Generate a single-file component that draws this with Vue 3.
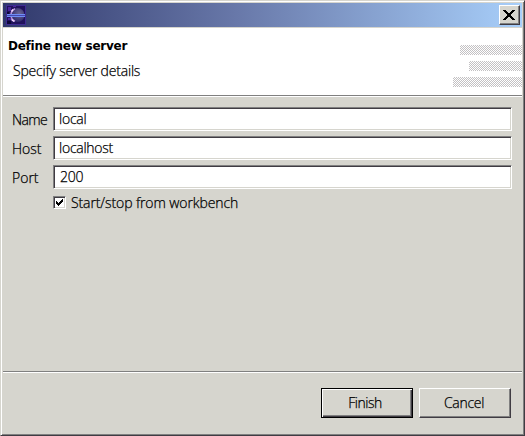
<script setup>
import { ref } from 'vue'

const fields = ref([
  { id: 'name', label: 'Name', value: 'local' },
  { id: 'host', label: 'Host', value: 'localhost' },
  { id: 'port', label: 'Port', value: '200' },
])
const managed = ref(true)
</script>

<template>
  <div class="dialog">
    <header class="titlebar">
      <svg class="logo" width="20" height="20" viewBox="0 0 20 20">
        <defs>
          <radialGradient id="orb" cx=".62" cy=".4" r=".65">
            <stop offset="0" stop-color="#6c6898" />
            <stop offset="1" stop-color="#2c2566" />
          </radialGradient>
        </defs>
        <rect width="20" height="20" fill="#3f2b94" />
        <rect x="1" y="1" width="18" height="18" fill="#21125c" />
        <path d="M2 2h3v4H2zM7 1h3v1H7zM2 13h3v2H2z" fill="#4a259c" />
        <path d="M1 16h4v3H1zM1 7h2v2H1z" fill="#0d0638" />
        <circle cx="11.5" cy="10" r="7" fill="url(#orb)" />
        <path d="M9 3.8Q5 5.5 5 10t4 6.2" fill="none" stroke="#b792dc" stroke-width="1.5" />
        <path d="M7 4.5 5.5 6.5M5.5 14.5 8 16.5" stroke="#f3dcff" stroke-width="1.4" />
        <path d="M1 9.5h18M1 11.5h18" stroke="#6f8df6" />
        <path d="M1 10.5h18" stroke="#4648b0" />
      </svg>
      <button class="close" aria-label="Close">
        <svg width="12" height="10" viewBox="0 0 12 10" shape-rendering="crispEdges">
          <template v-for="i in 10" :key="i">
            <rect :x="i - 1" :y="i - 1" width="3" height="1" />
            <rect :x="10 - i" :y="i - 1" width="3" height="1" />
          </template>
        </svg>
      </button>
    </header>

    <section class="banner">
      <div class="heading">
        <h1>Define new server</h1>
        <p>Specify server details</p>
      </div>
      <div class="stripes"><i class="mid" /><i class="short" /><i class="long" /></div>
    </section>

    <main class="form">
      <div v-for="f in fields" :key="f.id" class="row">
        <label :for="f.id" :class="f.id">{{ f.label }}</label>
        <input :id="f.id" v-model="f.value" :class="f.id" type="text" spellcheck="false" />
      </div>
      <div class="check" @click="managed = !managed">
        <span class="box">
          <svg v-if="managed" width="7" height="7" viewBox="0 0 7 7" shape-rendering="crispEdges">
            <path d="M0 2h1v1h1v1h1V3h1V2h1V1h1V0h1v3H6v1H5v1H4v1H3v1H2V6H1V5H0z" />
          </svg>
        </span>
        <span class="caption">Start/stop from workbench</span>
      </div>
    </main>

    <footer class="actions">
      <button class="btn primary"><span>Finish</span></button>
      <button class="btn"><span>Cancel</span></button>
    </footer>
  </div>
</template>

<style>
body { margin: 0; background: #d6d5ce; }
</style>

<style scoped>
* { box-sizing: border-box; }
.dialog {
  width: 525px;
  height: 436px;
  display: flex;
  flex-direction: column;
  background: #d6d5ce;
  border: 1px solid;
  border-color: #d6d5ce #403c43 #403c43 #d6d5ce;
  box-shadow: inset 1px 1px #fff, inset -1px -1px #808080;
  padding: 2px 2px 1px;
  font: 14px/18px "Open Sans", "Noto Sans", sans-serif;
  font-weight: 300;
  color: #000;
  -webkit-text-stroke: 0.25px #000;
}
.titlebar {
  flex: none;
  height: 24px;
  padding: 0 3px;
  display: flex;
  align-items: center;
  justify-content: space-between;
  background: linear-gradient(90deg, #30386b, #6878a9 45%, #a8cffa);
}
.logo { display: block; }
.close {
  width: 21px;
  height: 20px;
  margin-right: -1px;
  padding: 0 2px 1px 0;
  display: flex;
  align-items: center;
  justify-content: center;
  background: #d6d5ce;
  border: 1px solid;
  border-color: #fff #403c43 #403c43 #fff;
  box-shadow: inset -1px -1px #808080;
}
.close svg { flex: none; }
.banner {
  flex: none;
  height: 70px;
  border-top: 1px solid #d6d5ce;
  border-bottom: 1px solid #fff;
  box-shadow: inset 0 -1px #808080;
  background: #fff;
  display: flex;
  justify-content: space-between;
}
h1 {
  margin: 9px 0 0 5px;
  font: bold 12px/18px "DejaVu Sans", sans-serif;
  letter-spacing: -0.25px;
  -webkit-text-stroke: 0;
}
p { margin: 7px 0 0 10px; letter-spacing: -0.2px; }
.stripes {
  padding-top: 17px;
  display: flex;
  flex-direction: column;
  align-items: flex-end;
  gap: 6px;
}
.stripes i {
  height: 10px;
  background: repeating-conic-gradient(#c3c1c3 0 25%, #fff 0 50%) 0 0 / 2px 2px;
}
.mid { width: 62px; }
.short { width: 53px; }
.long { width: 69px; }
.form {
  flex: 1;
  padding: 10px 10px 0 9px;
  display: flex;
  flex-direction: column;
  gap: 5px;
}
.row { display: flex; height: 24px; }
label { width: 41px; padding-top: 4px; }
label.name { letter-spacing: -0.6px; }
input {
  flex: 1;
  min-width: 0;
  height: 24px;
  margin: 0;
  padding: 0 5px 1px;
  border: 1px solid;
  border-color: #808080 #fff #fff #808080;
  box-shadow: inset 1px 1px #403c43, inset -1px -1px #d6d5ce;
  border-radius: 0;
  outline: 0;
  background: #fff;
  color: #000;
  font: inherit;
  letter-spacing: -0.25px;
}
input.port { padding-left: 6px; }
.check {
  display: flex;
  align-items: center;
  height: 18px;
  margin: 0 0 0 41px;
  gap: 5px;
}
.caption { letter-spacing: -0.1px; }
.box {
  width: 13px;
  height: 13px;
  margin-top: -1px;
  display: flex;
  align-items: center;
  justify-content: center;
  background: #fff;
  border: 1px solid;
  border-color: #808080 #fff #fff #808080;
  box-shadow: inset 1px 1px #403c43, inset -1px -1px #d6d5ce;
}
.actions {
  flex: none;
  height: 63px;
  border-top: 1px solid #808080;
  box-shadow: inset 0 1px #fff;
  padding: 16px 11px 0 0;
  display: flex;
  justify-content: flex-end;
  gap: 6px;
}
.btn {
  width: 92px;
  height: 30px;
  padding: 0 2px 0 0;
  background: #d6d5ce;
  color: #000;
  font: inherit;
  letter-spacing: -0.3px;
  border: 1px solid;
  border-color: #fff #403c43 #403c43 #fff;
  box-shadow: inset -1px -1px #808080;
}
.btn.primary {
  padding-right: 4px;
  letter-spacing: -0.5px;
  border-color: #000;
  box-shadow: inset 1px 1px #fff, inset -1px -1px #403c43, inset -2px -2px #808080;
}
</style>
